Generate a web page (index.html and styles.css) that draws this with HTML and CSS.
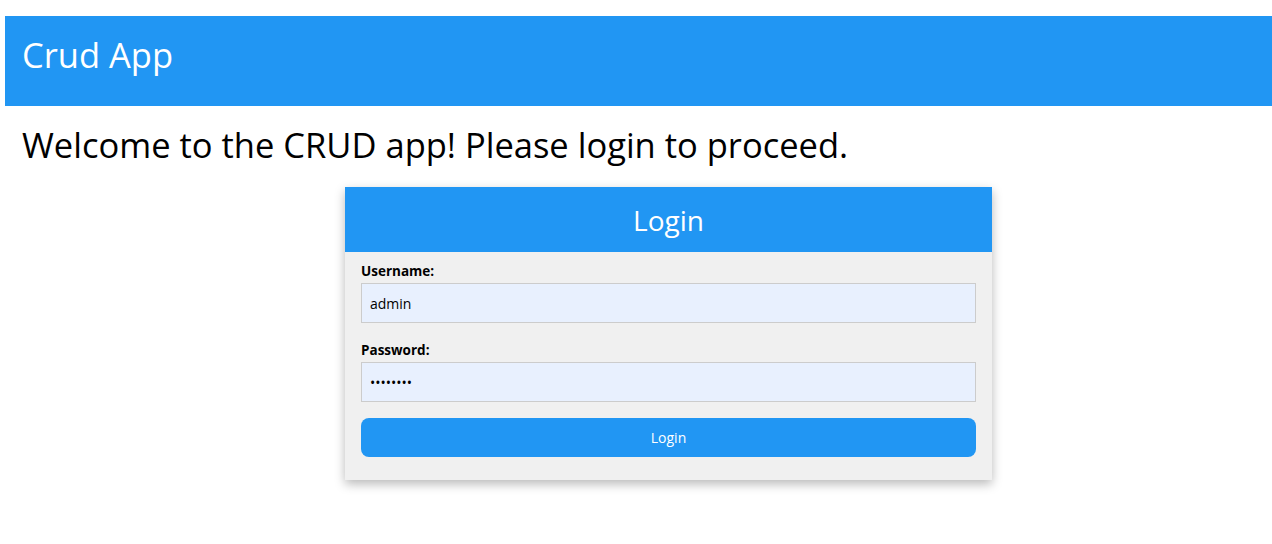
FILE: index.html
```html
<!DOCTYPE html>
<html lang="en">
<head>
<meta charset="utf-8">
<title>Crud App</title>
<link rel="stylesheet" href="styles.css">
</head>
<body>
  <header class="app-header">
    <h1 class="app-title">Crud App</h1>
  </header>
  <main class="content">
    <p class="welcome">Welcome to the CRUD app! Please login to proceed.</p>
    <section class="login-card">
      <h2 class="login-head">Login</h2>
      <form class="login-body">
        <label class="field-label" for="username">Username:</label>
        <input id="username" class="field-input" type="text" value="admin">
        <label class="field-label field-label-gap" for="password">Password:</label>
        <input id="password" class="field-input" type="password" value="password">
        <button class="login-btn" type="button">Login</button>
      </form>
    </section>
  </main>
</body>
</html>
```

FILE: styles.css
```css
* { box-sizing: border-box; }

html, body {
  margin: 0;
  background: #ffffff;
}

html {
  min-height: 100%;
}

body {
  min-height: 544px;
  padding: 16px 0 0 5px;
  font-family: "Open Sans", "Noto Sans", sans-serif;
  color: #000;
}

.app-header {
  height: 90px;
  background: #2196f3;
  padding: 22px 17px 0;
}

.app-title {
  margin: 0;
  font-size: 34.5px;
  font-weight: 400;
  line-height: 34px;
  color: #fff;
}

.content {
  padding: 0 17px 40px;
}

.welcome {
  margin: 22px 0 25px;
  font-size: 34.5px;
  line-height: 34px;
}

.login-card {
  width: 647px;
  margin-left: 323px;
  background: #f0f0f0;
  box-shadow: 0 4px 10px rgba(0, 0, 0, 0.28);
}

.login-head {
  margin: 0;
  height: 65px;
  padding-top: 19px;
  background: #2196f3;
  color: #fff;
  font-size: 28px;
  font-weight: 400;
  line-height: 1;
  text-align: center;
}

.login-body {
  display: flex;
  flex-direction: column;
  padding: 12px 16px 23px;
}

.field-label {
  font-size: 13.5px;
  font-weight: 700;
  line-height: 14px;
  margin-bottom: 5px;
}

.field-label-gap {
  margin-top: 20px;
}

.field-input {
  height: 40px;
  width: 100%;
  margin: 0;
  padding: 0 8px;
  border: 1px solid #cccccc;
  background: #e8f0fe;
  font-family: "Open Sans", "Noto Sans", sans-serif;
  font-size: 14px;
  color: #000;
  outline: none;
}

.login-btn {
  margin-top: 16px;
  height: 39px;
  width: 100%;
  border: none;
  border-radius: 8px;
  background: #2196f3;
  color: #fff;
  font-family: "Open Sans", "Noto Sans", sans-serif;
  font-size: 14px;
  line-height: 1;
  padding: 0;
}
```
